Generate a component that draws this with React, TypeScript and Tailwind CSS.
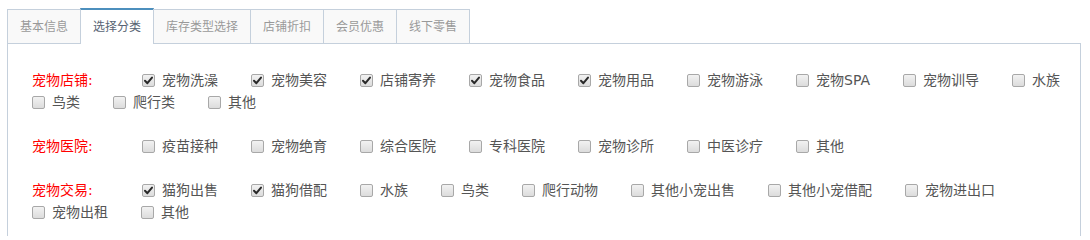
import React from 'react';

type Option = { label: string; checked?: boolean };

const tabs = ['基本信息', '选择分类', '库存类型选择', '店铺折扣', '会员优惠', '线下零售'];

const sections: { title: string; options: Option[] }[] = [
  {
    title: '宠物店铺:',
    options: [
      { label: '宠物洗澡', checked: true },
      { label: '宠物美容', checked: true },
      { label: '店铺寄养', checked: true },
      { label: '宠物食品', checked: true },
      { label: '宠物用品', checked: true },
      { label: '宠物游泳' },
      { label: '宠物SPA' },
      { label: '宠物训导' },
      { label: '水族' },
      { label: '鸟类' },
      { label: '爬行类' },
      { label: '其他' },
    ],
  },
  {
    title: '宠物医院:',
    options: [
      { label: '疫苗接种' },
      { label: '宠物绝育' },
      { label: '综合医院' },
      { label: '专科医院' },
      { label: '宠物诊所' },
      { label: '中医诊疗' },
      { label: '其他' },
    ],
  },
  {
    title: '宠物交易:',
    options: [
      { label: '猫狗出售', checked: true },
      { label: '猫狗借配', checked: true },
      { label: '水族' },
      { label: '鸟类' },
      { label: '爬行动物' },
      { label: '其他小宠出售' },
      { label: '其他小宠借配' },
      { label: '宠物进出口' },
      { label: '宠物出租' },
      { label: '其他' },
    ],
  },
];

function CheckBox({ checked }: { checked?: boolean }) {
  return (
    <span className="w-[13px] h-[13px] flex-shrink-0 rounded-[2px] border border-[#a8a8a8] bg-gradient-to-b from-[#f2f2f2] to-[#dcdcdc] flex items-center justify-center">
      {checked && (
        <svg width="11" height="11" viewBox="0 0 11 11">
          <path d="M2 5.8 L4.4 8.2 L9 2.6" fill="none" stroke="#2a2a2a" strokeWidth="2" strokeLinecap="round" strokeLinejoin="round" />
        </svg>
      )}
    </span>
  );
}

export default function App() {
  return (
    <div
      className="w-[1090px] h-[236px] overflow-hidden bg-white"
      style={{ fontFamily: '"DejaVu Sans", "Noto Sans CJK SC", sans-serif' }}
    >
      <div className="ml-[7px] mt-[8px] w-[1074px]">
        {/* Tabs */}
        <div className="flex items-end relative z-10">
          {tabs.map((tab, i) =>
            i === 1 ? (
              <div
                key={tab}
                className="h-[36px] -mb-px -ml-px px-3 flex items-center bg-white border-x border-[#c5d0dc] border-t-2 border-t-[#4c8fbd] text-[12px] leading-none text-[#576373]"
              >
                {tab}
              </div>
            ) : (
              <div
                key={tab}
                className={`h-[34px] ${i === 0 ? '' : '-ml-px'} px-3 flex items-center bg-[#f9f9f9] border-x border-t border-[#c5d0dc] text-[12px] leading-none text-[#999]`}
              >
                {tab}
              </div>
            )
          )}
        </div>

        {/* Panel */}
        <div className="border border-[#c5d0dc] pt-[25px] pl-[24px] pr-[12px] pb-[30px] text-[14px] leading-[22px] text-[#555]">
          {sections.map((s, si) => (
            <div key={s.title} className={`flex flex-wrap gap-x-[33px] ${si > 0 ? 'mt-[22px]' : ''}`}>
              <span className="w-[77px] text-[#ff0000]">{s.title}</span>
              {s.options.map((o, oi) => (
                <label key={oi} className="flex items-center gap-[7px]">
                  <CheckBox checked={o.checked} />
                  <span>{o.label}</span>
                </label>
              ))}
            </div>
          ))}
        </div>
      </div>
    </div>
  );
}
